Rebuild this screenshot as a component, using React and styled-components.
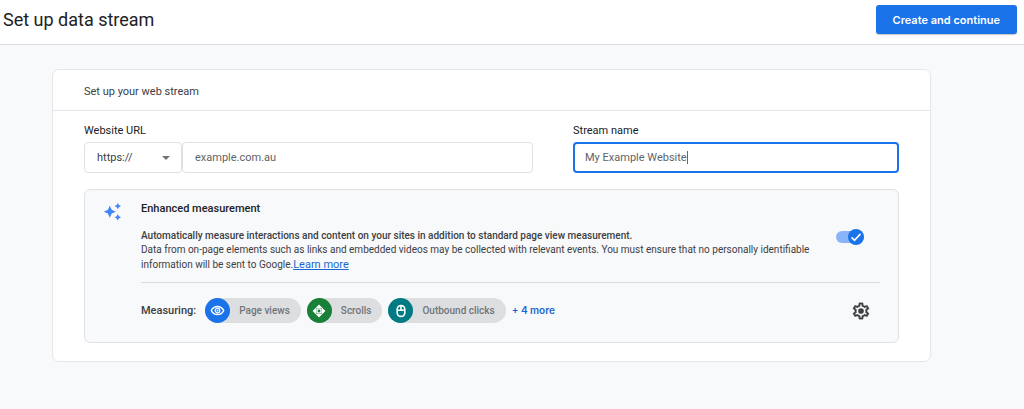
import React, {useState} from 'react';
import styled, {createGlobalStyle} from 'styled-components';

const GlobalStyle = createGlobalStyle`
    * {
        box-sizing: border-box;
    }

    body {
        margin: 0;
        min-height: 100vh;
        background-color: #f8f9fb;
        color: #3c4043;
        font-family: Roboto, "Liberation Sans", sans-serif;
        font-size: 11px;
        line-height: 16px;
    }

    button, input, select {
        font: inherit;
        color: inherit;
    }
`;

const Header = styled.header`
    display: flex;
    align-items: center;
    justify-content: space-between;
    padding: 5px 7px 10px 3px;
    background-color: #fff;
    border-bottom: 1px solid #dadce0;
`;

const Title = styled.h1`
    margin: 0;
    font-size: 18px;
    line-height: 24px;
    font-weight: 400;
    color: #202124;
`;

const PrimaryButton = styled.button`
    height: 29px;
    padding: 0 17px;
    border: 0;
    border-radius: 3px;
    background-color: #1a73e8;
    box-shadow: 0 1px 1px rgba(60, 64, 67, 0.3);
    color: #fff;
    font-family: Inter, Roboto, sans-serif;
    font-weight: 600;
`;

const Card = styled.main`
    margin: 24px 93px 40px 52px;
    background-color: #fff;
    border: 1px solid #e4e6e9;
    border-radius: 7px;
`;

const CardTitle = styled.h2`
    margin: 0;
    padding: 14px 31px 10px;
    border-bottom: 1px solid #e4e6e9;
    font-size: 11px;
    line-height: 16px;
    font-weight: 400;
`;

const CardBody = styled.div`
    padding: 12px 31px 18px;
`;

const Fields = styled.div`
    display: grid;
    grid-template-columns: 449fr 326fr;
    gap: 40px;
    margin-bottom: 16px;
`;

const Label = styled.label`
    display: block;
    margin-bottom: 3px;
    color: #202124;
`;

const UrlRow = styled.div`
    display: flex;
`;

const SelectWrap = styled.div`
    position: relative;
    width: 98px;
    flex: none;

    svg {
        position: absolute;
        top: 14px;
        right: 12px;
        pointer-events: none;
    }
`;

const Select = styled.select`
    display: block;
    width: 100%;
    height: 31px;
    padding: 0 12px;
    appearance: none;
    background-color: #fff;
    border: 1px solid #dfe1e5;
    border-radius: 4px;
    outline: none;
`;

const TextInput = styled.input`
    display: block;
    width: 100%;
    min-width: 0;
    height: 31px;
    padding: ${({$active}) => $active ? '0 10px' : '0 12px'};
    background-color: #fff;
    border: ${({$active}) => $active ? '2px solid #1a73e8' : '1px solid #dfe1e5'};
    border-radius: 4px;
    outline: none;
    color: #5f6368;
    caret-color: transparent;
`;

const InputWrap = styled.div`
    position: relative;
`;

const Caret = styled.span`
    position: absolute;
    top: 9px;
    left: 114px;
    width: 1px;
    height: 13px;
    background-color: #1a73e8;
`;

const Panel = styled.section`
    display: grid;
    grid-template-columns: 32px 1fr;
    column-gap: 8px;
    padding: 11px 18px 19px 16px;
    background-color: #f8f9fb;
    border: 1px solid #dfe1e5;
    border-radius: 6px;
`;

const PanelTitle = styled.h3`
    margin: 0 0 12px;
    font-size: 11px;
    line-height: 16px;
    font-weight: 500;
    color: #202124;
`;

const Summary = styled.div`
    display: flex;
    justify-content: space-between;
    padding-bottom: 9px;
    border-bottom: 1px solid #dadce0;
`;

const Description = styled.p`
    flex: 0 1 684px;
    margin: 0;
    font-size: 10px;
    line-height: 14px;
`;

const Strong = styled.strong`
    display: block;
    font-weight: 500;
`;

const Link = styled.a`
    font-size: 11px;
    line-height: 16px;
    color: #1967d2;
`;

const Switch = styled.label`
    position: relative;
    display: block;
    flex: none;
    width: 28px;
    height: 16px;
    margin: 0 16px 0 0;
`;

const SwitchInput = styled.input`
    display: block;
    width: 28px;
    height: 12px;
    margin: 2px 0;
    appearance: none;
    border-radius: 6px;
    background-color: ${({checked}) => checked ? '#8ab4f8' : '#bdc1c6'};
`;

const Knob = styled.svg`
    position: absolute;
    top: 0;
    ${({$on}) => $on ? 'right' : 'left'}: 0;
    border-radius: 50%;
    background-color: ${({$on}) => $on ? '#1a73e8' : '#fff'};
    pointer-events: none;
`;

const Measuring = styled.div`
    display: flex;
    align-items: center;
    padding-top: 15px;
`;

const MeasuringLabel = styled.span`
    margin-right: 9px;
    font-weight: 500;
`;

const Chip = styled.span`
    display: flex;
    align-items: center;
    height: 25px;
    margin-right: 6px;
    padding-right: 11px;
    border-radius: 13px;
    background-color: #dddee0;
    color: #70757a;
    font-size: 10px;
    font-weight: 500;
`;

const ChipIcon = styled.span`
    display: flex;
    align-items: center;
    justify-content: center;
    width: 25px;
    height: 25px;
    margin-right: 9px;
    border-radius: 50%;
    background-color: ${({$color}) => $color};
`;

const MoreButton = styled.button`
    padding: 0 0 2px;
    border: 0;
    background: none;
    color: #1967d2;
    font-family: Inter, Roboto, sans-serif;
    font-size: 10px;
    font-weight: 600;
`;

const IconButton = styled.button`
    display: flex;
    margin: 0 9px 0 auto;
    padding: 0;
    border: 0;
    background: none;
`;

const Sparkles = () => (
    <svg width="22" height="20" viewBox="0 0 22 20" fill="#4285f4">
        <path d="M8.8 4.7 L10.7 8.8 L14.8 10.7 L10.7 12.6 L8.8 16.7 L6.9 12.6 L2.8 10.7 L6.9 8.8Z" />
        <path d="M16.8 1.9 L17.9 4 L20 5.1 L17.9 6.2 L16.8 8.3 L15.7 6.2 L13.6 5.1 L15.7 4Z" />
        <path d="M16.8 13.1 L17.9 15.2 L20 16.3 L17.9 17.4 L16.8 19.5 L15.7 17.4 L13.6 16.3 L15.7 15.2Z" />
    </svg>
);

const EyeIcon = () => (
    <svg width="15" height="15" viewBox="0 0 15 15" fill="none" stroke="#fff">
        <path d="M1.3 7.5C2.6 4.8 4.8 3.4 7.5 3.4s4.9 1.4 6.2 4.1c-1.3 2.7-3.5 4.1-6.2 4.1S2.6 10.2 1.3 7.5z" strokeWidth="1.5" />
        <circle cx="7.5" cy="7.5" r="2.3" strokeWidth="1.2" />
        <circle cx="7.5" cy="7.5" r="1" fill="#fff" stroke="none" />
    </svg>
);

const ScrollIcon = () => (
    <svg width="14" height="14" viewBox="0 0 14 14" fill="#fff">
        <path d="M7 .6L10.2 3.8 9 4.6Q7 3.2 5 4.6L3.8 3.8zM7 13.4L3.8 10.2 5 9.4Q7 10.8 9 9.4l1.2.8zM.6 7l3.2-3.2.8 1.2Q3.2 7 4.6 9l-.8 1.2zM13.4 7l-3.2 3.2L9.4 9Q10.8 7 9.4 5l.8-1.2z" />
        <circle cx="7" cy="7" r="2.1" fill="none" stroke="#fff" strokeWidth="1.3" />
    </svg>
);

const MouseIcon = () => (
    <svg width="14" height="14" viewBox="0 0 14 14" fill="none" stroke="#fff" strokeWidth="1.6">
        <rect x="3.2" y="1.6" width="7.6" height="10.8" rx="3.6" />
        <path d="M3.2 6.2h7.6M7 1.6v4.6" />
    </svg>
);

const GearIcon = () => (
    <svg width="20" height="20" viewBox="0 0 24 24" fill="#3c4043">
        <path stroke="#3c4043" strokeWidth=".3" d="M19.43 12.98c.04-.32.07-.64.07-.98 0-.34-.03-.66-.07-.98l2.11-1.65c.19-.15.24-.42.12-.64l-2-3.46c-.09-.16-.26-.25-.44-.25-.06 0-.12.01-.17.03l-2.49 1c-.52-.4-1.08-.73-1.69-.98l-.38-2.65C14.46 2.18 14.25 2 14 2h-4c-.25 0-.46.18-.49.42l-.38 2.65c-.61.25-1.17.59-1.69.98l-2.49-1c-.06-.02-.12-.03-.18-.03-.17 0-.34.09-.43.25l-2 3.46c-.13.22-.07.49.12.64l2.11 1.65c-.04.32-.07.65-.07.98 0 .33.03.66.07.98l-2.11 1.65c-.19.15-.24.42-.12.64l2 3.46c.09.16.26.25.44.25.06 0 .12-.01.17-.03l2.49-1c.52.4 1.08.73 1.69.98l.38 2.65c.03.24.24.42.49.42h4c.25 0 .46-.18.49-.42l.38-2.65c.61-.25 1.17-.59 1.69-.98l2.49 1c.06.02.12.03.18.03.17 0 .34-.09.43-.25l2-3.46c.12-.22.07-.49-.12-.64l-2.11-1.65zm-1.98-1.71c.04.31.05.52.05.73 0 .21-.02.43-.05.73l-.14 1.13.89.7 1.08.84-.7 1.21-1.27-.51-1.04-.42-.9.68c-.43.32-.84.56-1.25.73l-1.06.43-.16 1.13-.2 1.35h-1.4l-.19-1.35-.16-1.13-1.06-.43c-.43-.18-.83-.41-1.23-.71l-.91-.7-1.06.43-1.27.51-.7-1.21 1.08-.84.89-.7-.14-1.13c-.03-.31-.05-.54-.05-.74s.02-.43.05-.73l.14-1.13-.89-.7-1.08-.84.7-1.21 1.27.51 1.04.42.9-.68c.43-.32.84-.56 1.25-.73l1.06-.43.16-1.13.2-1.35h1.39l.19 1.35.16 1.13 1.06.43c.43.18.83.41 1.23.71l.91.7 1.06-.43 1.27-.51.7 1.21-1.07.85-.89.7.14 1.13z" />
        <circle cx="12" cy="12" r="3.4" />
    </svg>
);

const chips = [
    {label: 'Page views', color: '#1a73e8', Icon: EyeIcon},
    {label: 'Scrolls', color: '#188038', Icon: ScrollIcon},
    {label: 'Outbound clicks', color: '#007b83', Icon: MouseIcon}
];

const StreamFields = () => (
    <Fields>
        <div>
            <Label htmlFor="url">Website URL</Label>
            <UrlRow>
                <SelectWrap>
                    <Select aria-label="Protocol" defaultValue="https">
                        <option value="https">https://</option>
                        <option value="http">http://</option>
                    </Select>
                    <svg width="8" height="4" viewBox="0 0 8 4" fill="#70757a">
                        <path d="M0 0h8L4 4z" />
                    </svg>
                </SelectWrap>
                <TextInput id="url" type="text" defaultValue="example.com.au" />
            </UrlRow>
        </div>
        <div>
            <Label htmlFor="name">Stream name</Label>
            <InputWrap>
                <TextInput id="name" type="text" defaultValue="My Example Website" $active />
                <Caret />
            </InputWrap>
        </div>
    </Fields>
);

const EnhancedMeasurement = () => {
    const [enabled, setEnabled] = useState(true);

    return (
        <Panel>
            <Sparkles />
            <div>
                <PanelTitle>Enhanced measurement</PanelTitle>
                <Summary>
                    <Description>
                        <Strong>Automatically measure interactions and content on your sites in addition to standard page view measurement.</Strong>
                        Data from on-page elements such as links and embedded videos may be collected with relevant events. You must ensure that no personally identifiable information will be sent to Google.<Link href="#">Learn more</Link>
                    </Description>
                    <Switch>
                        <SwitchInput
                            type="checkbox"
                            role="switch"
                            aria-label="Enhanced measurement"
                            checked={enabled}
                            onChange={() => setEnabled(!enabled)} />
                        <Knob $on={enabled} width="16" height="16" viewBox="0 0 16 16">
                            {enabled && <path d="M3.6 8.4l2.9 2.9 6-6.4" fill="none" stroke="#fff" strokeWidth="1.6" />}
                        </Knob>
                    </Switch>
                </Summary>
                <Measuring>
                    <MeasuringLabel>Measuring:</MeasuringLabel>
                    {chips.map(({label, color, Icon}) => (
                        <Chip key={label}>
                            <ChipIcon $color={color}><Icon /></ChipIcon>
                            {label}
                        </Chip>
                    ))}
                    <MoreButton type="button">+ 4 more</MoreButton>
                    <IconButton type="button" aria-label="Settings"><GearIcon /></IconButton>
                </Measuring>
            </div>
        </Panel>
    );
};

const App = () => {
    return (
        <>
            <GlobalStyle />
            <Header>
                <Title>Set up data stream</Title>
                <PrimaryButton type="button">Create and continue</PrimaryButton>
            </Header>
            <Card>
                <CardTitle>Set up your web stream</CardTitle>
                <CardBody>
                    <StreamFields />
                    <EnhancedMeasurement />
                </CardBody>
            </Card>
        </>
    );
};

export default App;
